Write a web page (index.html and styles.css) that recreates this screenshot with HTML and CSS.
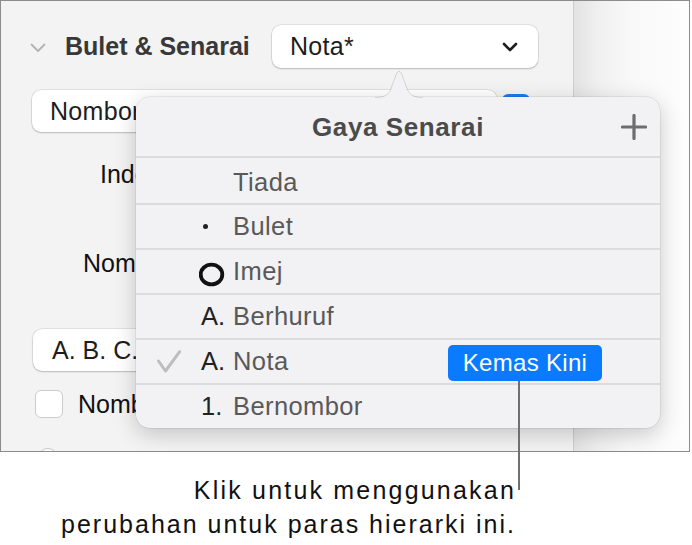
FILE: index.html
```html
<!DOCTYPE html>
<html lang="ms">
<head>
<meta charset="utf-8">
<title>Gaya Senarai</title>
<link rel="stylesheet" href="styles.css">
</head>
<body>
<div class="page">
  <div class="frame">
    <div class="sidebar">
      <div class="row-head">
        <svg class="disclosure" width="16" height="10" viewBox="0 0 16 10"><path d="M1.5 1.5 L8 8 L14.5 1.5" fill="none" stroke="#b3b3b3" stroke-width="1.8" stroke-linecap="round" stroke-linejoin="round"/></svg>
        <span class="section-title">Bulet &amp; Senarai</span>
        <div class="popup popup-style">
          <span>Nota*</span>
          <svg class="popup-chev" width="16" height="10" viewBox="0 0 16 10"><path d="M2 2 L8 8 L14 2" fill="none" stroke="#1e1e1e" stroke-width="2.6" stroke-linecap="round" stroke-linejoin="round"/></svg>
        </div>
      </div>
      <div class="row-type">
        <div class="popup popup-type"><span class="clip clip-type">Nombor</span></div>
        <span class="blue-box"></span>
      </div>
      <div class="label label-indent"><span class="clip clip-indent">Inden Bulet:</span></div>
      <div class="label label-num"><span class="clip clip-num">Nombor Mula:</span></div>
      <div class="popup popup-format"><span class="clip clip-format">A. B. C. D.</span></div>
      <div class="check-row"><span class="checkbox"></span><span class="clip clip-check">Nombor Berperingkat</span></div>
      <span class="radio"></span>
    </div>
    <div class="canvas"></div>

    <div class="popover">
      <svg class="pop-arrow" width="48" height="28" viewBox="0 0 48 28">
        <path d="M0 28 C8 28 13 26 16 20 L22 3.5 Q24 0 26 3.5 L32 20 C35 26 40 28 48 28 Z" fill="#f2f2f4"/>
        <path d="M0 27.5 C8 27.5 13 25.5 15.6 19.6 L21.6 3.3 Q24 -0.5 26.4 3.3 L32.4 19.6 C35 25.5 40 27.5 48 27.5" fill="none" stroke="rgba(0,0,0,0.13)" stroke-width="1"/>
      </svg>
      <div class="pop-header">
        <span></span>
        <span class="pop-title">Gaya Senarai</span>
        <svg class="plus" width="26" height="26" viewBox="0 0 26 26"><path d="M13 1.5 V24.5 M1.5 13 H24.5" stroke="#6d6d6d" stroke-width="3.2" stroke-linecap="round"/></svg>
      </div>
      <div class="opt opt-first">
        <span class="check-col"></span><span class="marker"></span><span class="opt-label">Tiada</span>
      </div>
      <div class="opt">
        <span class="check-col"></span><span class="marker"><span class="dot"></span></span><span class="opt-label">Bulet</span>
      </div>
      <div class="opt">
        <span class="check-col"></span>
        <span class="marker"><svg class="ring" width="27" height="25" viewBox="0 0 27 25"><ellipse cx="12.5" cy="12.5" rx="10.8" ry="9.9" fill="none" stroke="#111" stroke-width="3.8"/></svg></span>
        <span class="opt-label">Imej</span>
      </div>
      <div class="opt">
        <span class="check-col"></span><span class="marker">A.</span><span class="opt-label">Berhuruf</span>
      </div>
      <div class="opt">
        <span class="check-col"><svg width="24" height="23" viewBox="0 0 24 23"><path d="M1.5 11 L8.5 21 L22.5 1.8" fill="none" stroke="#bdbdbd" stroke-width="3" stroke-linecap="round" stroke-linejoin="round"/></svg></span>
        <span class="marker">A.</span><span class="opt-label">Nota</span>
        <span class="update-btn">Kemas Kini</span>
      </div>
      <div class="opt">
        <span class="check-col"></span><span class="marker">1.</span><span class="opt-label">Bernombor</span>
      </div>
    </div>
  </div>
  <p class="callout"><span class="callout-first">Klik untuk menggunakan</span><br>perubahan untuk paras hierarki ini.</p>
  <span class="callout-line"></span>
</div>
</body>
</html>
```

FILE: styles.css
```css
html, body {
  margin: 0;
  padding: 0;
  background: #ffffff;
}

body {
  font-family: "Liberation Sans", Arial, sans-serif;
  color: #1d1d1d;
}

.page {
  position: relative;
  width: 692px;
  height: 545px;
  overflow: hidden;
}

.frame {
  position: relative;
  box-sizing: border-box;
  width: 690px;
  height: 452px;
  border: 1px solid #8c8c8c;
  display: flex;
}

/* ---------- sidebar ---------- */
.sidebar {
  width: 572px;
  flex: none;
  background: #f3f3f3;
  border-right: 1px solid #cecece;
  display: flex;
  flex-direction: column;
  align-items: flex-start;
  overflow: hidden;
  font-size: 25px;
}

.sidebar > * {
  flex: none;
}

/* text that runs in under the popover is clipped at its left edge */
.clip {
  display: block;
  overflow: hidden;
  white-space: nowrap;
}

.clip-type { width: 86px; }
.clip-indent { width: 36px; }
.clip-num { width: 53px; }
.clip-format { width: 84px; letter-spacing: 0; }
.clip-check { width: 58px; }

.row-head {
  margin-top: 24px;
  height: 43px;
  padding-left: 29px;
  display: flex;
  align-items: center;
}

.disclosure {
  flex: none;
  margin-right: 19px;
  margin-top: 2px;
}

.section-title {
  width: 207px;
  font-weight: 700;
  color: #383838;
  white-space: nowrap;
}

.popup {
  box-sizing: border-box;
  background: #ffffff;
  border-radius: 9px;
  box-shadow: 0 0 0 0.5px rgba(0, 0, 0, 0.14), 0 1px 2px rgba(0, 0, 0, 0.18);
  display: flex;
  align-items: center;
  color: #1d1d1d;
  white-space: nowrap;
  letter-spacing: 0.3px;
}

.popup-style {
  width: 266px;
  height: 43px;
  padding: 0 20px 0 18px;
}

.popup-chev {
  margin-left: auto;
  margin-top: 1px;
}

.row-type {
  margin-top: 22px;
  height: 42px;
  padding-left: 31px;
  display: flex;
  align-items: flex-start;
}

.popup-type {
  width: 465px;
  height: 42px;
  padding-left: 18px;
}

.blue-box {
  width: 28px;
  height: 28px;
  margin: 4px 0 0 5px;
  border-radius: 6px;
  background: #1a7cf5;
}

.label {
  height: 30px;
  line-height: 30px;
  color: #111111;
}

.label-indent {
  margin-top: 27px;
  padding-left: 99px;
}

.label-num {
  margin-top: 59px;
  padding-left: 82px;
}

.popup-format {
  margin: 51px 0 0 32px;
  width: 465px;
  height: 42px;
  padding-left: 19px;
}

.check-row {
  margin-top: 19px;
  height: 28px;
  padding-left: 34px;
  display: flex;
  align-items: center;
  color: #111111;
}

.checkbox {
  box-sizing: border-box;
  width: 28px;
  height: 28px;
  margin-right: 15px;
  border-radius: 6px;
  background: #ffffff;
  border: 1px solid #cbcbcb;
}

.radio {
  display: block;
  box-sizing: border-box;
  margin: 30px 0 0 37px;
  width: 20px;
  height: 20px;
  border-radius: 50%;
  border: 1px solid #c6c6c6;
  background: #ffffff;
}

.canvas {
  flex: 1;
  background: linear-gradient(to right, #e3e3e3 0px, #efefef 22px, #f8f8f8 55px, #fdfdfd 100%);
}

/* ---------- popover ---------- */
.popover {
  position: absolute;
  left: 135px;
  top: 96px;
  width: 524px;
  height: 331px;
  box-sizing: border-box;
  background: #f2f2f4;
  border-radius: 14px;
  box-shadow: 0 0 0 0.5px rgba(0, 0, 0, 0.12), 0 6px 22px rgba(0, 0, 0, 0.2);
  display: flex;
  flex-direction: column;
  font-size: 25.5px;
}

.pop-arrow {
  position: absolute;
  left: 239px;
  top: -27px;
}

.pop-header {
  height: 59px;
  flex: none;
  padding: 0 13px;
  display: grid;
  grid-template-columns: 1fr auto 1fr;
  align-items: center;
}

.pop-title {
  font-size: 26px;
  font-weight: 700;
  letter-spacing: 0.6px;
  color: #4b4b4b;
  margin-top: 1px;
}

.plus {
  justify-self: end;
}

.opt {
  box-sizing: border-box;
  height: 45px;
  flex: none;
  border-top: 2px solid #dcdcde;
  padding-left: 21px;
  display: flex;
  align-items: center;
  white-space: nowrap;
}

.opt-first {
  height: 47px;
  padding-top: 3px;
}

.check-col {
  width: 44px;
  flex: none;
  display: flex;
  align-items: center;
}

.marker {
  width: 32px;
  flex: none;
  color: #222222;
  display: flex;
  align-items: center;
}

.dot {
  width: 5px;
  height: 5px;
  margin-left: 2px;
  border-radius: 50%;
  background: #222222;
}

.ring {
  margin-left: -2px;
  margin-top: 5px;
}

.opt-label {
  color: #595959;
  letter-spacing: 0.4px;
}

.update-btn {
  margin: 3px 58px 0 auto;
  width: 154px;
  height: 36px;
  border-radius: 5px;
  background: #0a7aff;
  color: #ffffff;
  font-size: 24px;
  letter-spacing: 0.3px;
  display: flex;
  align-items: center;
  justify-content: center;
}

/* ---------- callout ---------- */
.callout {
  margin: 21px 0 0;
  width: 516px;
  text-align: right;
  font-size: 25px;
  line-height: 34px;
  letter-spacing: 2px;
  color: #111111;
}

.callout-first {
  letter-spacing: 2.2px;
}

.callout-line {
  position: absolute;
  left: 518px;
  top: 381px;
  width: 1.5px;
  height: 109px;
  background: #707070;
}
```
